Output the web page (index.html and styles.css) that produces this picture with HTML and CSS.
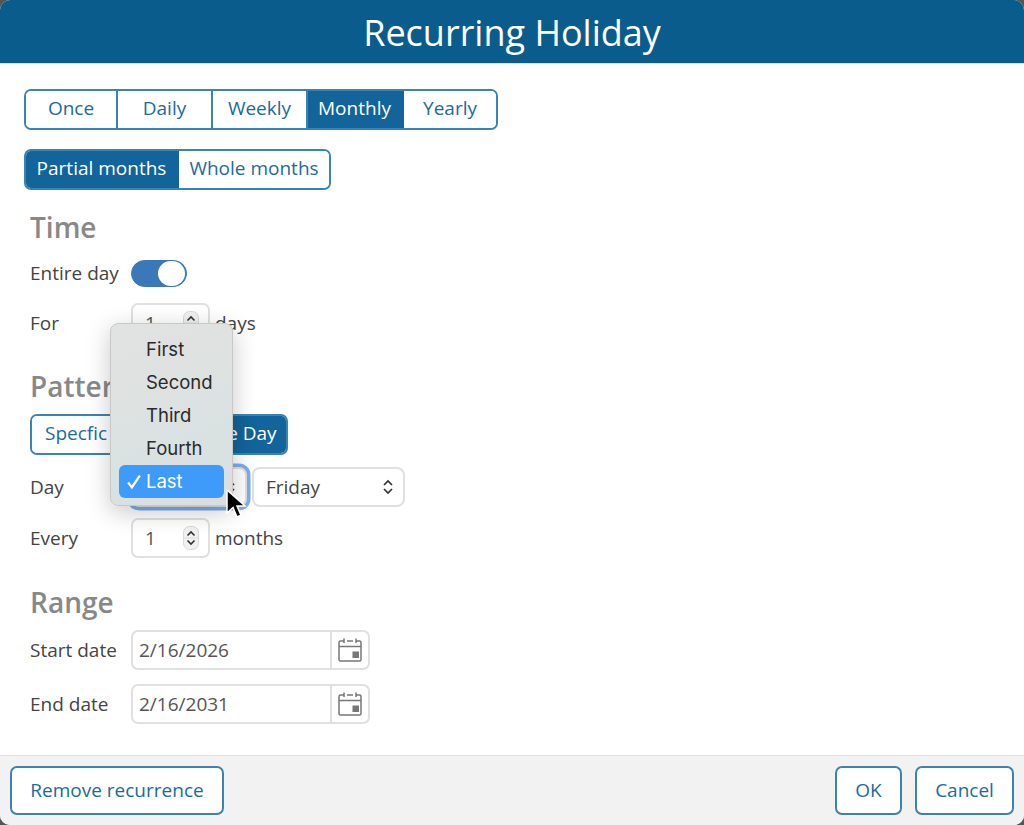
FILE: index.html
```html
<!DOCTYPE html>
<html lang="en">
<head>
<meta charset="utf-8">
<title>Recurring Holiday</title>
<link rel="stylesheet" href="styles.css">
</head>
<body>
<div class="dialog">
  <header class="title">Recurring Holiday</header>
  <main class="content">
    <div class="seg seg-freq">
      <button class="seg-btn w-once">Once</button>
      <button class="seg-btn w-mid">Daily</button>
      <button class="seg-btn w-mid">Weekly</button>
      <button class="seg-btn on w-month">Monthly</button>
      <button class="seg-btn w-once">Yearly</button>
    </div>
    <div class="seg seg-months">
      <button class="seg-btn on">Partial months</button>
      <button class="seg-btn">Whole months</button>
    </div>
    <section class="group group-time">
      <h2>Time</h2>
      <div class="row row-toggle">
        <label>Entire day</label>
        <span class="toggle"><span class="knob"></span></span>
      </div>
      <div class="row row-for">
        <label>For</label>
        <span class="spin"><span class="val">1</span>
          <svg class="spin-ic" width="16" height="24" viewBox="0 0 16 24"><rect x="0.5" y="0.5" width="15" height="23" rx="6" fill="#f1f1f1" stroke="#d8d8d8"/><path d="M4.500 9.500 8 6l3.500 3.500M4.500 14.500 8 18l3.500-3.500" fill="none" stroke="#333" stroke-width="1.600"/><path d="M1 12h14" stroke="#ddd"/></svg>
        </span>
        <span class="unit">days</span>
      </div>
    </section>
    <section class="group group-pattern">
      <h2>Pattern</h2>
      <div class="seg seg-pattern">
        <button class="seg-btn">Specfic Day</button>
        <button class="seg-btn on">Relative Day</button>
      </div>
      <div class="row row-day">
        <label>Day</label>
        <span class="select select-focus">Last
          <svg width="12" height="18" viewBox="0 0 12 18"><path d="M2 7 6 3l4 4M2 11l4 4 4-4" fill="none" stroke="#333" stroke-width="1.700"/></svg>
        </span>
        <span class="select select-day">Friday
          <svg width="12" height="18" viewBox="0 0 12 18"><path d="M2 7 6 3l4 4M2 11l4 4 4-4" fill="none" stroke="#333" stroke-width="1.700"/></svg>
        </span>
      </div>
      <div class="row row-every">
        <label>Every</label>
        <span class="spin"><span class="val">1</span>
          <svg class="spin-ic" width="16" height="24" viewBox="0 0 16 24"><rect x="0.5" y="0.5" width="15" height="23" rx="6" fill="#f1f1f1" stroke="#d8d8d8"/><path d="M4.500 9.500 8 6l3.500 3.500M4.500 14.500 8 18l3.500-3.500" fill="none" stroke="#333" stroke-width="1.600"/><path d="M1 12h14" stroke="#ddd"/></svg>
        </span>
        <span class="unit">months</span>
      </div>
    </section>
    <section class="group group-range">
      <h2>Range</h2>
      <div class="row row-date">
        <label>Start date</label>
        <span class="date"><span class="date-val">2/16/2026</span>
          <span class="date-btn"><svg width="24" height="26" viewBox="0 0 24 26"><path d="M6 4H2.500A1.500 1.500 0 0 0 1 5.500v17A1.500 1.500 0 0 0 2.500 24h19a1.500 1.500 0 0 0 1.500-1.500v-17A1.500 1.500 0 0 0 21.500 4H18M9 4h6M1 9.500h22M6 1.500V6M18 1.500V6" fill="none" stroke="#777" stroke-width="1.500"/><rect x="14.500" y="14.500" width="6.500" height="6.500" fill="#777"/></svg></span>
        </span>
      </div>
      <div class="row row-date">
        <label>End date</label>
        <span class="date"><span class="date-val">2/16/2031</span>
          <span class="date-btn"><svg width="24" height="26" viewBox="0 0 24 26"><path d="M6 4H2.500A1.500 1.500 0 0 0 1 5.500v17A1.500 1.500 0 0 0 2.500 24h19a1.500 1.500 0 0 0 1.500-1.500v-17A1.500 1.500 0 0 0 21.500 4H18M9 4h6M1 9.500h22M6 1.500V6M18 1.500V6" fill="none" stroke="#777" stroke-width="1.500"/><rect x="14.500" y="14.500" width="6.500" height="6.500" fill="#777"/></svg></span>
        </span>
      </div>
    </section>
  </main>
  <footer class="foot">
    <button class="btn btn-remove">Remove recurrence</button>
    <span class="foot-space"></span>
    <button class="btn btn-ok">OK</button>
    <button class="btn btn-cancel">Cancel</button>
  </footer>
  <ul class="menu">
    <li>First</li>
    <li>Second</li>
    <li>Third</li>
    <li>Fourth</li>
    <li class="sel"><svg class="check" width="17" height="17" viewBox="0 0 16 16"><path d="M2 9l3.500 4.500L13 2.500" fill="none" stroke="#fff" stroke-width="2.200"/></svg>Last</li>
  </ul>
  <svg class="cursor" width="22" height="30" viewBox="0 0 22 30"><path d="M2 1v23l6-5.500 4 9.500 4-1.700-4-9.300h8z" fill="#000" stroke="#fff" stroke-width="1.500"/></svg>
</div>
</body>
</html>
```
FILE: styles.css
```css
* { box-sizing: border-box; }
html, body { margin: 0; height: 100%; background: #555; }
body { font-family: "Open Sans", sans-serif; font-size: 19px; color: #444; }
.dialog {
  position: relative;
  width: 1024px;
  height: 825px;
  background: #fff;
  border-radius: 10px;
  overflow: hidden;
  display: flex;
  flex-direction: column;
}
.title {
  height: 64px;
  flex: none;
  background: #0a5c8c;
  border-bottom: 1px solid #d5e3ec;
  color: #fff;
  font-size: 36px;
  font-weight: 500;
  line-height: 65px;
  text-align: center;
}
.content { flex: 1; padding: 25px 24px 0; }
.seg {
  display: flex;
  border: 2px solid #3a84b3;
  border-radius: 7px;
  overflow: hidden;
  background: #fff;
  height: 41px;
}
.seg-btn {
  font: inherit;
  font-size: 19px;
  color: #1b6b9e;
  background: #fff;
  border: 0;
  padding: 0 0 3px;
  height: 100%;
  white-space: nowrap;
}
.seg-btn.on { background: #12649a; color: #fff; }
.seg-freq { width: 474px; }
.w-once { width: 92px; }
.w-mid { width: 95px; border-right: 2px solid #3a84b3; }
.w-once:first-child { border-right: 2px solid #3a84b3; }
.w-month { width: 96px; padding-right: 3px; }
.seg-months { width: 307px; margin-top: 19px; }
.seg-months .seg-btn { flex: none; width: 153px; }
.seg-months .seg-btn.on { padding-right: 2px; }
.seg-months .seg-btn + .seg-btn { flex: 1; }
.group { padding-left: 6px; }
h2 {
  margin: 0;
  font-size: 28px;
  font-weight: 600;
  color: #888;
  line-height: 36px;
}
.group-time { margin-top: 19px; }
.row { display: flex; align-items: center; }
.row label { width: 101px; flex: none; }
.row-toggle { height: 28px; margin-top: 14px; }
.row-for { height: 40px; margin-top: 16px; }
.toggle {
  width: 56px;
  height: 27px;
  border-radius: 14px;
  background: #3b78b9;
  border: 1.500px solid #3b78b9;
  padding-left: 26px;
  display: block;
}
.knob {
  display: block;
  width: 27px;
  height: 25px;
  border-radius: 13px;
  background: #fff;
}
.spin {
  width: 79px;
  height: 40px;
  border: 2px solid #e0e0e0;
  border-radius: 7px;
  display: flex;
  align-items: center;
  padding: 0 9px 0 12px;
  justify-content: space-between;
  color: #555;
}
.unit { margin-left: 5px; }
.group-pattern { margin-top: 25px; }
.seg-pattern { width: 258px; margin-top: 10px; }
.seg-pattern .seg-btn { flex: 1; }
.row-day { height: 40px; margin-top: 12px; }
.select {
  height: 40px;
  border: 2px solid #e0e0e0;
  border-radius: 8px;
  display: flex;
  align-items: center;
  justify-content: space-between;
  padding: 0 9px 0 12px;
  background: #fff;
}
.select-focus {
  width: 116px;
  box-shadow: 0 0 0 3.500px #7aaef0;
}
.select-day { width: 153px; margin-left: 5px; }
.row-every { height: 40px; margin-top: 11px; }
.group-range { margin-top: 26px; }
.row-date { height: 40px; margin-bottom: 14px; }
.row-date:nth-of-type(1) { margin-top: 10px; }
.date {
  width: 239px;
  height: 40px;
  border: 2px solid #e0e0e0;
  border-radius: 7px;
  display: flex;
  align-items: center;
  color: #555;
}
.date-val { flex: 1; padding-left: 6px; }
.date-btn {
  width: 38px;
  height: 100%;
  border-left: 2px solid #e0e0e0;
  display: flex;
  align-items: center;
  justify-content: center;
}
.foot {
  height: 70px;
  flex: none;
  background: #f2f2f2;
  border-top: 1px solid #e0e0e0;
  display: flex;
  align-items: flex-start;
  padding: 10px 10px 0;
}
.foot-space { flex: 1; }
.btn {
  font: inherit;
  font-size: 19px;
  color: #1b6b9e;
  background: #fff;
  height: 49px;
  border: 2px solid #3a84b3;
  border-radius: 7px;
  padding: 0 0 2px;
}
.btn-remove { width: 214px; }
.btn-ok { width: 67px; }
.btn-cancel { width: 99px; margin-left: 13px; }
.menu {
  position: absolute;
  left: 110px;
  top: 323px;
  width: 123px;
  height: 183px;
  margin: 0;
  padding: 9px 8px;
  list-style: none;
  border: 1px solid #c8c8c8;
  border-radius: 8px;
  background: linear-gradient(160deg, #e2e2e2 0%, #d9e2e1 75%, #dcdcdc 100%);
  box-shadow: 0 6px 24px rgba(0,0,0,.22);
  font-family: Inter, sans-serif;
  font-size: 18.500px;
  color: #2a2a2a;
}
.menu li {
  height: 33px;
  line-height: 33px;
  padding-left: 27px;
  border-radius: 6px;
  position: relative;
}
.menu li.sel { background: #3f9bf9; color: #fff; }
.check { position: absolute; left: 7px; top: 8px; }
.cursor { position: absolute; left: 225px; top: 489px; }
```
